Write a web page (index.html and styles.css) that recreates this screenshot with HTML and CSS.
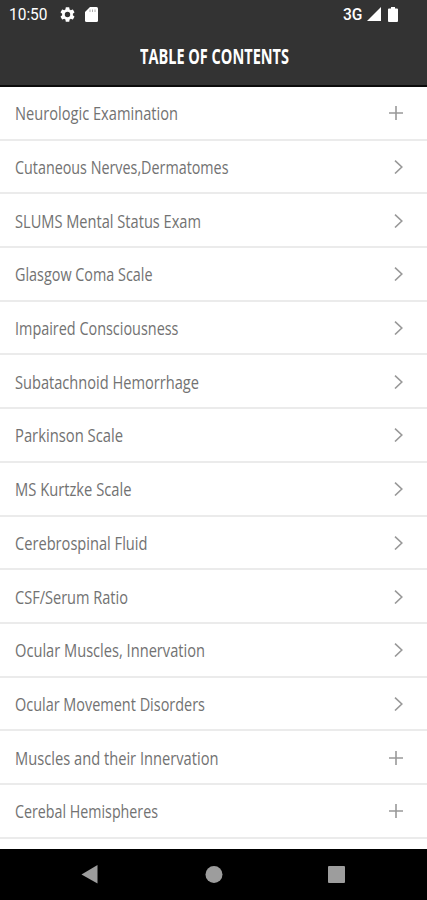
FILE: index.html
```html
<!DOCTYPE html>
<html lang="en">
<head>
<meta charset="utf-8">
<title>Table of Contents</title>
<link rel="stylesheet" href="styles.css">
</head>
<body>
<svg class="defs" aria-hidden="true">
  <symbol id="plus" viewBox="0 0 14 14"><path d="M7 0v14M0 7h14"/></symbol>
  <symbol id="chevron" viewBox="0 0 9 14"><path d="M1 .7 7.8 7 1 13.5"/></symbol>
</svg>
<header class="header">
  <div class="status">
    <span class="time"><span class="fit" data-width="38.500">10:50</span></span>
    <svg class="gear" viewBox="2 2 20 20"><path fill-rule="evenodd" d="M19.14 12.94c.04-.3.06-.61.06-.94s-.02-.64-.07-.94l2.03-1.58a.5.5 0 0 0 .12-.61l-1.92-3.32a.5.5 0 0 0-.59-.22l-2.39.96a7 7 0 0 0-1.62-.94l-.36-2.54a.5.5 0 0 0-.48-.41h-3.84a.5.5 0 0 0-.47.41l-.36 2.54a7 7 0 0 0-1.62.94l-2.39-.96a.5.5 0 0 0-.59.22L2.74 8.87a.5.5 0 0 0 .12.61l2.03 1.58a6 6 0 0 0 0 1.88l-2.03 1.58a.5.5 0 0 0-.12.61l1.92 3.32c.12.22.37.29.59.22l2.39-.96c.5.38 1.03.7 1.62.94l.36 2.54c.05.24.24.41.48.41h3.84c.24 0 .44-.17.47-.41l.36-2.54a7 7 0 0 0 1.62-.94l2.39.96c.22.08.47 0 .59-.22l1.92-3.32a.5.5 0 0 0-.12-.61zM12 15.6a3.6 3.6 0 1 1 0-7.200 3.600 3.600 0 0 1 0 7.200z"/></svg>
    <svg class="card" viewBox="0 0 13 15"><path d="M5 0h6.500Q13 0 13 1.500v12Q13 15 11.500 15h-10Q0 15 0 13.500V5z"/><path class="contacts" d="M5 2.500v2.500M7.500 2.500v2.500M10 2.500v2.500"/></svg>
    <span class="network"><span class="fit" data-width="19.500">3G</span></span>
    <svg class="signal" viewBox="0 0 14 14"><path d="M14 0v14H0z"/></svg>
    <svg class="battery" viewBox="0 0 10 15"><path d="M3 0h4v1.500h2q1 0 1 1V14q0 1-1 1H1q-1 0-1-1V2.500q0-1 1-1h2z"/></svg>
  </div>
  <h1 class="title"><span class="fit" data-width="149">TABLE OF CONTENTS</span></h1>
</header>
<main class="list">
  <div class="row"><span class="fit" data-width="163">Neurologic Examination</span><svg class="plus"><use href="#plus"/></svg></div>
  <div class="row"><span class="fit" data-width="213.500">Cutaneous Nerves,Dermatomes</span><svg class="chevron"><use href="#chevron"/></svg></div>
  <div class="row"><span class="fit" data-width="186">SLUMS Mental Status Exam</span><svg class="chevron"><use href="#chevron"/></svg></div>
  <div class="row"><span class="fit" data-width="137.500">Glasgow Coma Scale</span><svg class="chevron"><use href="#chevron"/></svg></div>
  <div class="row"><span class="fit" data-width="163.500">Impaired Consciousness</span><svg class="chevron"><use href="#chevron"/></svg></div>
  <div class="row"><span class="fit" data-width="184">Subatachnoid Hemorrhage</span><svg class="chevron"><use href="#chevron"/></svg></div>
  <div class="row"><span class="fit" data-width="108">Parkinson Scale</span><svg class="chevron"><use href="#chevron"/></svg></div>
  <div class="row"><span class="fit" data-width="116.500">MS Kurtzke Scale</span><svg class="chevron"><use href="#chevron"/></svg></div>
  <div class="row"><span class="fit" data-width="132.500">Cerebrospinal Fluid</span><svg class="chevron"><use href="#chevron"/></svg></div>
  <div class="row"><span class="fit" data-width="113">CSF/Serum Ratio</span><svg class="chevron"><use href="#chevron"/></svg></div>
  <div class="row"><span class="fit" data-width="190">Ocular Muscles, Innervation</span><svg class="chevron"><use href="#chevron"/></svg></div>
  <div class="row"><span class="fit" data-width="190">Ocular Movement Disorders</span><svg class="chevron"><use href="#chevron"/></svg></div>
  <div class="row"><span class="fit" data-width="203.500">Muscles and their Innervation</span><svg class="plus"><use href="#plus"/></svg></div>
  <div class="row"><span class="fit" data-width="143">Cerebal Hemispheres</span><svg class="plus"><use href="#plus"/></svg></div>
</main>
<nav class="nav">
  <svg viewBox="0 0 427 51">
    <path d="M81.500 25.500 97.500 16v18.500z"/>
    <circle cx="214" cy="25.500" r="8.500"/>
    <rect x="328" y="17" width="17" height="17" rx="1"/>
  </svg>
</nav>
<script src="fit.js"></script>
</body>
</html>
```
FILE: styles.css
```css
* { box-sizing: border-box; }

body {
  margin: 0;
  width: 427px;
  height: 900px;
  overflow: hidden;
  display: flex;
  flex-direction: column;
  background: #fff;
  font-family: "Open Sans", "Noto Sans", sans-serif;
}

svg { display: block; flex: none; }
.defs { position: absolute; width: 0; height: 0; }

.fit {
  display: block;
  width: max-content;
  flex: none;
  white-space: nowrap;
  transform-origin: 0 50%;
}

.header {
  flex: none;
  height: 87px;
  background: #333;
  border-bottom: 2px solid #0c0c0c;
  color: #fff;
}

.status {
  display: flex;
  align-items: center;
  height: 28px;
  padding: 0 29px 0 9px;
  font-family: Roboto, sans-serif;
  font-size: 16.500px;
  fill: #fff;
}

.time { width: 51px; }
.gear { width: 15px; height: 15px; margin-right: 10px; }
.card { width: 13px; height: 15px; }
.contacts { fill: none; stroke: #aaa; stroke-width: 1; }
.network { width: 19px; margin-left: auto; font-weight: 500; font-size: 16px; }
.signal { width: 14px; height: 14px; margin: 0 7px 0 5px; }
.battery { width: 10px; height: 15px; }

.title {
  margin: 0 0 0 139.500px;
  font-size: 21px;
  line-height: 56px;
  font-weight: 700;
}

.list { flex: 1; min-height: 0; overflow: hidden; }

.row {
  display: flex;
  align-items: center;
  justify-content: space-between;
  height: 53.700px;
  padding: 1px 24.500px 0 15px;
  border-bottom: 2px solid #ebebeb;
  color: #727272;
  font-size: 19px;
  line-height: 26px;
}

.plus, .chevron { fill: none; stroke: #999; stroke-width: 1.600; }
.plus { width: 14px; height: 14px; }
.chevron { width: 9px; height: 14px; }

.nav {
  flex: none;
  height: 51px;
  background: #000;
  fill: #9d9d9d;
}
.nav svg { width: 427px; height: 51px; }
```
FILE: fit.js
```js
// Condense each label horizontally to its set width.
document.querySelectorAll(".fit").forEach(function (label) {
  var natural = label.getBoundingClientRect().width;
  label.style.transform = "scaleX(" + label.dataset.width / natural + ")";
});
```
